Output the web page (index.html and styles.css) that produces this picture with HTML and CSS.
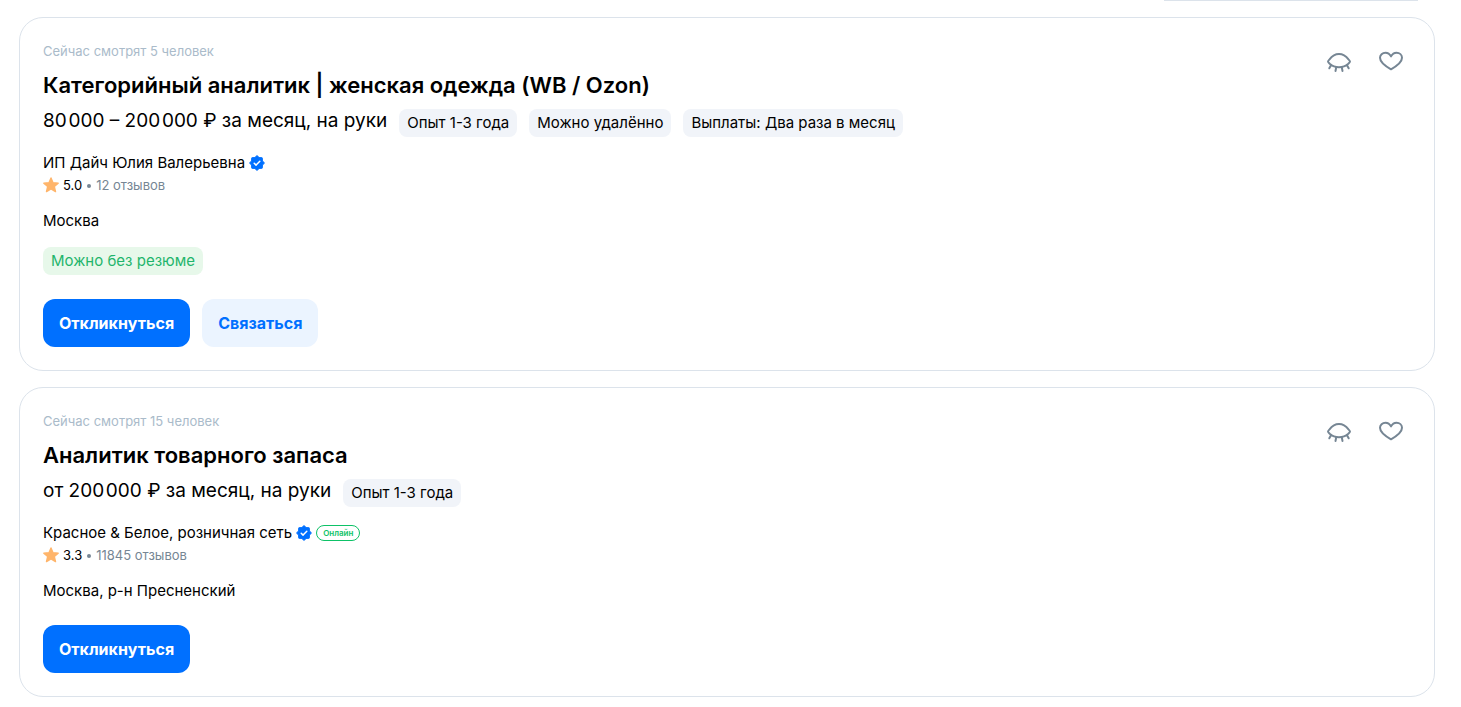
FILE: index.html
```html
<!DOCTYPE html>
<html lang="ru">
<head>
    <meta charset="UTF-8">
    <meta name="viewport" content="width=device-width, initial-scale=1.0">
    <title>Вакансии</title>
    <link rel="stylesheet" href="styles.css">
</head>
<body>
    <svg class="sprite" aria-hidden="true">
        <symbol id="icon-hide" viewBox="0 0 24 24">
            <path d="M1 12.500Q1 12 2.500 10.400C5.200 6.800 8.500 5 12 5s6.800 1.800 9.500 5.400Q23 12 23 12.500T21.300 14.700C18.700 17 15.500 18.200 12 18.200S5.300 17 2.700 14.700Q1 13 1 12.500Z"/>
            <path d="M4 16.300 2.300 19.300M9.200 18.300 8.500 22M14.800 18.300l.7 3.700M20 16.300l1.700 3"/>
        </symbol>
        <symbol id="icon-heart" viewBox="0 0 24 24">
            <path d="M12 7.400C10.500 4.600 8.700 3.700 6.500 3.700 3.400 3.700 1 5.900 1 8.800 1 12.500 4.300 16 12 20.300 19.700 16 23 12.500 23 8.800 23 5.900 20.600 3.700 17.500 3.700 15.300 3.700 13.500 4.600 12 7.400Z"/>
        </symbol>
        <symbol id="icon-verified" viewBox="0 0 16 16">
            <path fill="#0070ff" stroke="#0070ff" stroke-linejoin="round" d="M8 .6 10.100 2.500 13.200 2.800 13.500 5.900 15.400 8 13.500 10.100 13.200 13.200 10.100 13.500 8 15.400 5.900 13.500 2.800 13.200 2.500 10.100.6 8 2.500 5.900 2.800 2.800 5.900 2.500Z"/>
            <path fill="none" stroke="#fff" stroke-width="1.500" stroke-linecap="round" stroke-linejoin="round" d="m5.200 8.200 1.900 1.900 3.700-3.800"/>
        </symbol>
        <symbol id="icon-star" viewBox="0 0 16 16">
            <path fill="#ffb56b" stroke="#ffb56b" stroke-width="1.400" stroke-linejoin="round" d="M8 1 10 5.700 15.200 6.100 11.300 9.500 12.500 14.600 8 11.900 3.500 14.600 4.700 9.500.8 6.100 6 5.700Z"/>
        </symbol>
    </svg>

    <div class="panel"></div>

    <main class="vacancies">
        <article class="card">
            <div class="info">
                <div class="viewers">Сейчас смотрят 5 человек</div>
                <h2 class="title"><a href="#">Категорийный аналитик | женская одежда (WB / Ozon)</a></h2>
                <div class="conditions">
                    <span class="salary">80&#8202;000 – 200&#8202;000 ₽ за месяц, на руки</span>
                    <span class="tag">Опыт 1-3 года</span>
                    <span class="tag">Можно удалённо</span>
                    <span class="tag">Выплаты: Два раза в месяц</span>
                </div>
                <div class="company">
                    <a href="#">ИП Дайч Юлия Валерьевна</a>
                    <svg class="small-icon"><use href="#icon-verified"/></svg>
                </div>
                <div class="rating">
                    <svg class="small-icon"><use href="#icon-star"/></svg>
                    <span class="score">5.0</span>
                    <span class="dot"></span>
                    <a href="#">12 отзывов</a>
                </div>
                <div class="location">Москва</div>
                <div class="labels">
                    <span class="tag tag-green">Можно без резюме</span>
                </div>
                <div class="buttons">
                    <button class="btn">Откликнуться</button>
                    <button class="btn btn-light">Связаться</button>
                </div>
            </div>
            <div class="actions">
                <button class="icon-btn" aria-label="Скрыть"><svg><use href="#icon-hide"/></svg></button>
                <button class="icon-btn" aria-label="В избранное"><svg><use href="#icon-heart"/></svg></button>
            </div>
        </article>

        <article class="card">
            <div class="info">
                <div class="viewers">Сейчас смотрят 15 человек</div>
                <h2 class="title"><a href="#">Аналитик товарного запаса</a></h2>
                <div class="conditions">
                    <span class="salary">от 200&#8202;000 ₽ за месяц, на руки</span>
                    <span class="tag">Опыт 1-3 года</span>
                </div>
                <div class="company">
                    <a href="#">Красное &amp; Белое, розничная сеть</a>
                    <svg class="small-icon"><use href="#icon-verified"/></svg>
                    <span class="online">Онлайн</span>
                </div>
                <div class="rating">
                    <svg class="small-icon"><use href="#icon-star"/></svg>
                    <span class="score">3.3</span>
                    <span class="dot"></span>
                    <a href="#">11845 отзывов</a>
                </div>
                <div class="location">Москва, р-н Пресненский</div>
                <div class="buttons">
                    <button class="btn">Откликнуться</button>
                </div>
            </div>
            <div class="actions">
                <button class="icon-btn" aria-label="Скрыть"><svg><use href="#icon-hide"/></svg></button>
                <button class="icon-btn" aria-label="В избранное"><svg><use href="#icon-heart"/></svg></button>
            </div>
        </article>
    </main>
</body>
</html>
```
FILE: styles.css
```css
* {
    box-sizing: border-box;
}

body {
    margin: 0;
    font-family: Inter, "Liberation Sans", sans-serif;
    font-size: 15px;
    line-height: 20px;
    color: #000;
    background: #fff;
}

a {
    color: inherit;
    text-decoration: none;
}

.sprite {
    display: none;
}

.panel {
    width: 254px;
    height: 1px;
    margin: 0 43px 16px auto;
    background: #dce3eb;
}

.vacancies {
    display: flex;
    flex-direction: column;
    gap: 16px;
    margin: 0 26px 10px 19px;
}

.card {
    display: flex;
    justify-content: space-between;
    padding: 23px;
    border: 1px solid #dce3eb;
    border-radius: 24px;
}

.viewers {
    font-size: 13px;
    color: #aabbca;
}

.title {
    margin: 8px 0;
    font-size: 22px;
    line-height: 32px;
    font-weight: 600;
}

.conditions {
    display: flex;
    flex-wrap: wrap;
    align-items: flex-start;
    gap: 12px;
    margin-bottom: 16px;
}

.salary {
    font-size: 19px;
    line-height: 24px;
}

.tag {
    padding: 4px 8px;
    border-radius: 8px;
    background: #f1f4f9;
}

.tag-green {
    color: #1fb56c;
    background: #e7f8ea;
}

.company,
.rating {
    display: flex;
    align-items: center;
    gap: 4px;
}

.rating {
    margin: 2px 0 16px;
    font-size: 13px;
    color: #768694;
}

.small-icon {
    width: 16px;
    height: 16px;
}

.score {
    color: #000;
}

.dot {
    width: 4px;
    height: 4px;
    margin: 2px 1px 0;
    border-radius: 50%;
    background: #768694;
}

.online {
    padding: 0 6px;
    border: 1px solid #0dc267;
    border-radius: 8px;
    font-size: 8px;
    line-height: 14px;
    font-weight: 600;
    color: #0dc267;
}

.labels {
    display: flex;
    margin-top: 16px;
}

.buttons {
    display: flex;
    gap: 12px;
    margin-top: 24px;
}

.btn {
    height: 48px;
    padding: 0 16px;
    border: none;
    border-radius: 12px;
    font-family: inherit;
    font-size: 16px;
    font-weight: 700;
    color: #fff;
    background: #0070ff;
    cursor: pointer;
}

.btn-light {
    color: #0070ff;
    background: #ebf4ff;
}

.actions {
    display: flex;
    align-items: flex-start;
    gap: 28px;
    padding: 8px 8px 0 0;
}

.icon-btn {
    padding: 0;
    border: none;
    background: none;
    cursor: pointer;
}

.icon-btn svg {
    display: block;
    width: 24px;
    height: 24px;
    fill: none;
    stroke: #768694;
    stroke-width: 2;
    stroke-linecap: round;
    stroke-linejoin: round;
}
```
